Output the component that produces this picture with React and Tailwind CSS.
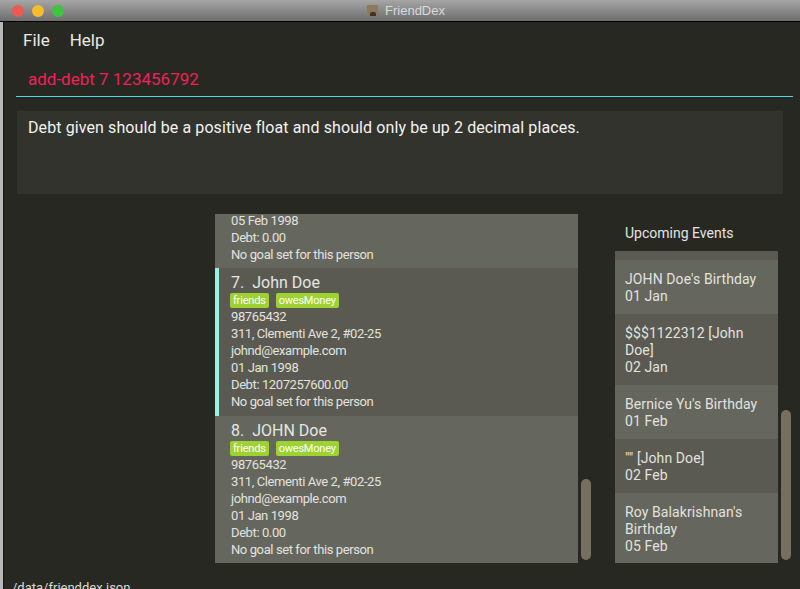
import React from 'react';

const persons = [
  {
    id: 7,
    name: 'John Doe',
    tags: ['friends', 'owesMoney'],
    phone: '98765432',
    address: '311, Clementi Ave 2, #02-25',
    email: 'johnd@example.com',
    birthday: '01 Jan 1998',
    debt: '1207257600.00',
    selected: true,
  },
  {
    id: 8,
    name: 'JOHN Doe',
    tags: ['friends', 'owesMoney'],
    phone: '98765432',
    address: '311, Clementi Ave 2, #02-25',
    email: 'johnd@example.com',
    birthday: '01 Jan 1998',
    debt: '0.00',
    selected: false,
  },
];

const events = [
  { lines: ["JOHN Doe's Birthday", '01 Jan'], dark: false },
  { lines: ['$$$1122312 [John', 'Doe]', '02 Jan'], dark: true },
  { lines: ["Bernice Yu's Birthday", '01 Feb'], dark: false },
  { lines: ['"" [John Doe]', '02 Feb'], dark: true },
  { lines: ["Roy Balakrishnan's", 'Birthday', '05 Feb'], dark: false },
];

const PersonCard = ({ person }) => (
  <div className={`relative pt-[5px] pb-[6px] pl-[16px] ${person.selected ? 'bg-[#5a5a52]' : 'bg-[#65665e]'}`}>
    {person.selected && <div className="absolute left-0 top-0 bottom-0 w-[4px] bg-[#9beee4]" />}
    <div className="h-[20px] leading-[20px] text-[16px] text-[#e6e6e2]">
      <span>{person.id}.</span>
      <span className="ml-[8px]">{person.name}</span>
    </div>
    <div className="flex gap-[7px] h-[15px] -ml-[1px]">
      {person.tags.map(tag => (
        <span key={tag} className="bg-[#9dd232] text-white text-[11px] tracking-[-0.2px] leading-[15px] px-[3px] rounded-[2px]">
          {tag}
        </span>
      ))}
    </div>
    <div className="text-[13px] tracking-[-0.4px] leading-[17px] text-[#e2e2de]">
      <div>{person.phone}</div>
      <div>{person.address}</div>
      <div>{person.email}</div>
      <div>{person.birthday}</div>
      <div>Debt: {person.debt}</div>
      <div>No goal set for this person</div>
    </div>
  </div>
);

export default function App() {
  return (
    <div className="w-[800px] h-[589px] overflow-hidden bg-[#282823] flex flex-col font-['Roboto',sans-serif]">
      {/* title bar */}
      <div className="relative h-[22px] shrink-0 bg-gradient-to-b from-[#a6a6a6] to-[#6e6e6e] border-b border-black flex items-center justify-center">
        <div className="absolute left-[12px] top-[5px] flex gap-[8px]">
          <div className="w-[12px] h-[12px] rounded-full bg-[#ec5b52]" />
          <div className="w-[12px] h-[12px] rounded-full bg-[#f4bd30]" />
          <div className="w-[12px] h-[12px] rounded-full bg-[#40c440]" />
        </div>
        <div className="flex items-center gap-[7px] ml-[12px]">
          <div className="w-[11px] h-[11px] bg-[#8b7a5e] rounded-[1px] flex items-end justify-center">
            <div className="w-[6px] h-[4px] bg-[#3e3428] rounded-t-[2px]" />
          </div>
          <span className="text-[13px] text-[#dadada] font-['Liberation_Sans',sans-serif]">FriendDex</span>
        </div>
      </div>

      <div className="flex flex-1 min-h-0">
        <div className="w-[3px] bg-[#b8b8b8] shrink-0" />
        <div className="w-[1px] bg-[#161614] shrink-0" />

        <div className="flex-1 flex flex-col min-w-0">
          {/* menu */}
          <div className="h-[38px] shrink-0 flex items-center pl-[19px] gap-[20px] text-[17px] text-[#e8e8e6]">
            <span>File</span>
            <span>Help</span>
          </div>

          {/* command box */}
          <div className="h-[37px] shrink-0 ml-[12px] mr-[7px] border-b border-[#4fd6e8] flex items-center pl-[12px] pt-[3px]">
            <span className="text-[17px] text-[#f02058]">add-debt 7 123456792</span>
          </div>

          {/* result box */}
          <div className="mt-[14px] ml-[13px] w-[766px] h-[83px] shrink-0 bg-[#33332e] pl-[11px] pt-[7px]">
            <p className="text-[16px] leading-[19px] tracking-[0.1px] text-[#f2f2f2]">
              Debt given should be a positive float and should only be up 2 decimal places.
            </p>
          </div>

          {/* lists */}
          <div className="mt-[20px] h-[349px] shrink-0 flex">
            <div className="ml-[211px] w-[363px] h-full overflow-hidden flex flex-col">
              <div className="h-[54px] shrink-0 overflow-hidden bg-[#65665e] pl-[16px]">
                <div className="-mt-[2px] text-[13px] tracking-[-0.4px] leading-[17px] text-[#e2e2de]">
                  <div>05 Feb 1998</div>
                  <div>Debt: 0.00</div>
                  <div>No goal set for this person</div>
                </div>
              </div>
              {persons.map(p => (
                <PersonCard key={p.id} person={p} />
              ))}
            </div>
            <div className="ml-[3px] w-[10px] h-full flex flex-col pt-[265px]">
              <div className="w-[10px] h-[81px] rounded-[5px] bg-[#766f5f]" />
            </div>

            <div className="ml-[24px] w-[163px] h-full flex flex-col">
              <div className="h-[37px] shrink-0 pl-[10px] flex items-center pt-[2px] text-[14px] text-[#e4e4e0]">
                Upcoming Events
              </div>
              <div className="flex-1 overflow-hidden flex flex-col">
                <div className="h-[9px] shrink-0 bg-[#5a5a52]" />
                {events.map((ev, i) => (
                  <div
                    key={i}
                    className={`pl-[10px] pr-[4px] pt-[11px] pb-[9px] text-[14px] tracking-[0.1px] leading-[17px] text-[#e2e2de] ${ev.dark ? 'bg-[#5a5a52]' : 'bg-[#65665e]'}`}
                  >
                    {ev.lines.map((l, j) => (
                      <div key={j} className="whitespace-nowrap">{l}</div>
                    ))}
                  </div>
                ))}
              </div>
            </div>
            <div className="ml-[3px] w-[10px] h-full flex flex-col pt-[196px]">
              <div className="w-[10px] h-[150px] rounded-[5px] bg-[#766f5f]" />
            </div>
          </div>

          {/* status */}
          <div className="pl-[8px] pt-[16px] text-[13px] leading-[17px] text-[#d8d8d4]">
            /data/frienddex.json
          </div>
        </div>
      </div>
    </div>
  );
}
